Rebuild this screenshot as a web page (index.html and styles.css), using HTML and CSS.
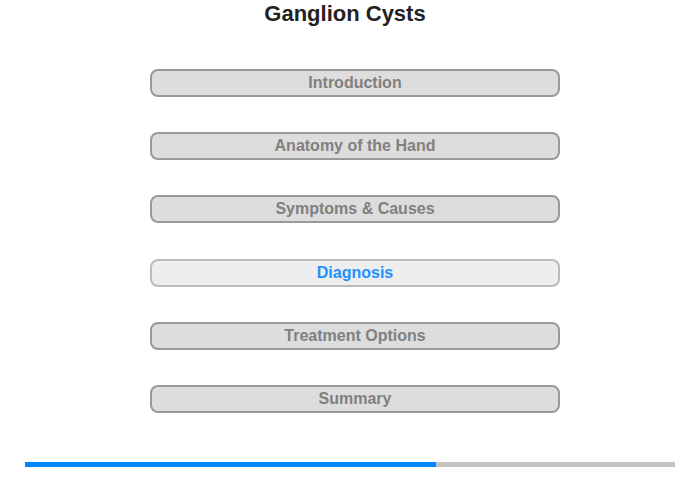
FILE: index.html
```html
<!DOCTYPE html>
<html lang="en">
<head>
  <meta charset="UTF-8">
  <title>Ganglion Cysts</title>
  <meta name="viewport" content="width=device-width, initial-scale=1.0">
  <link rel="stylesheet" href="styles.css">
</head>
<body>

  <h1 class="title">Ganglion Cysts</h1>

  <div class="menu">
    <button class="menu-item">Introduction</button>
    <button class="menu-item">Anatomy of the Hand</button>
    <button class="menu-item">Symptoms &amp; Causes</button>
    <button class="menu-item active">Diagnosis</button>
    <button class="menu-item">Treatment Options</button>
    <button class="menu-item">Summary</button>
  </div>

  <!-- progress -->
  <div class="progress">
    <div class="progress-fill" style="width: 63.2%"></div>
  </div>

</body>
</html>
```

FILE: styles.css
```css
body {
  margin: 0;
  font-family: "Liberation Sans", Arial, sans-serif;
  background: white;
}
.title {
  margin: 0;
  padding-top: 1px;
  width: 690px;
  text-align: center;
  font-size: 22px;
  line-height: 26px;
  color: #222;
}
.menu {
  display: flex;
  flex-direction: column;
  gap: 35.2px;
  padding-left: 150px;
  margin-top: 42px;
}
.menu-item {
  width: 410px;
  height: 28px;
  padding: 0;
  background: #dddddd;
  border: 2px solid #999999;
  border-radius: 8px;
  font-family: "Liberation Sans", Arial, sans-serif;
  font-weight: bold;
  font-size: 16px;
  color: #808080;
}
.menu-item.active {
  background: #eeeeee;
  border-color: #bbbbbb;
  color: #1e90ff;
}
.progress {
  margin: 49px 0 0 25px;
  width: 650px;
  height: 5px;
  background: #c4c4c4;
}
.progress-fill {
  height: 100%;
  background: #0088ff;
}
```
